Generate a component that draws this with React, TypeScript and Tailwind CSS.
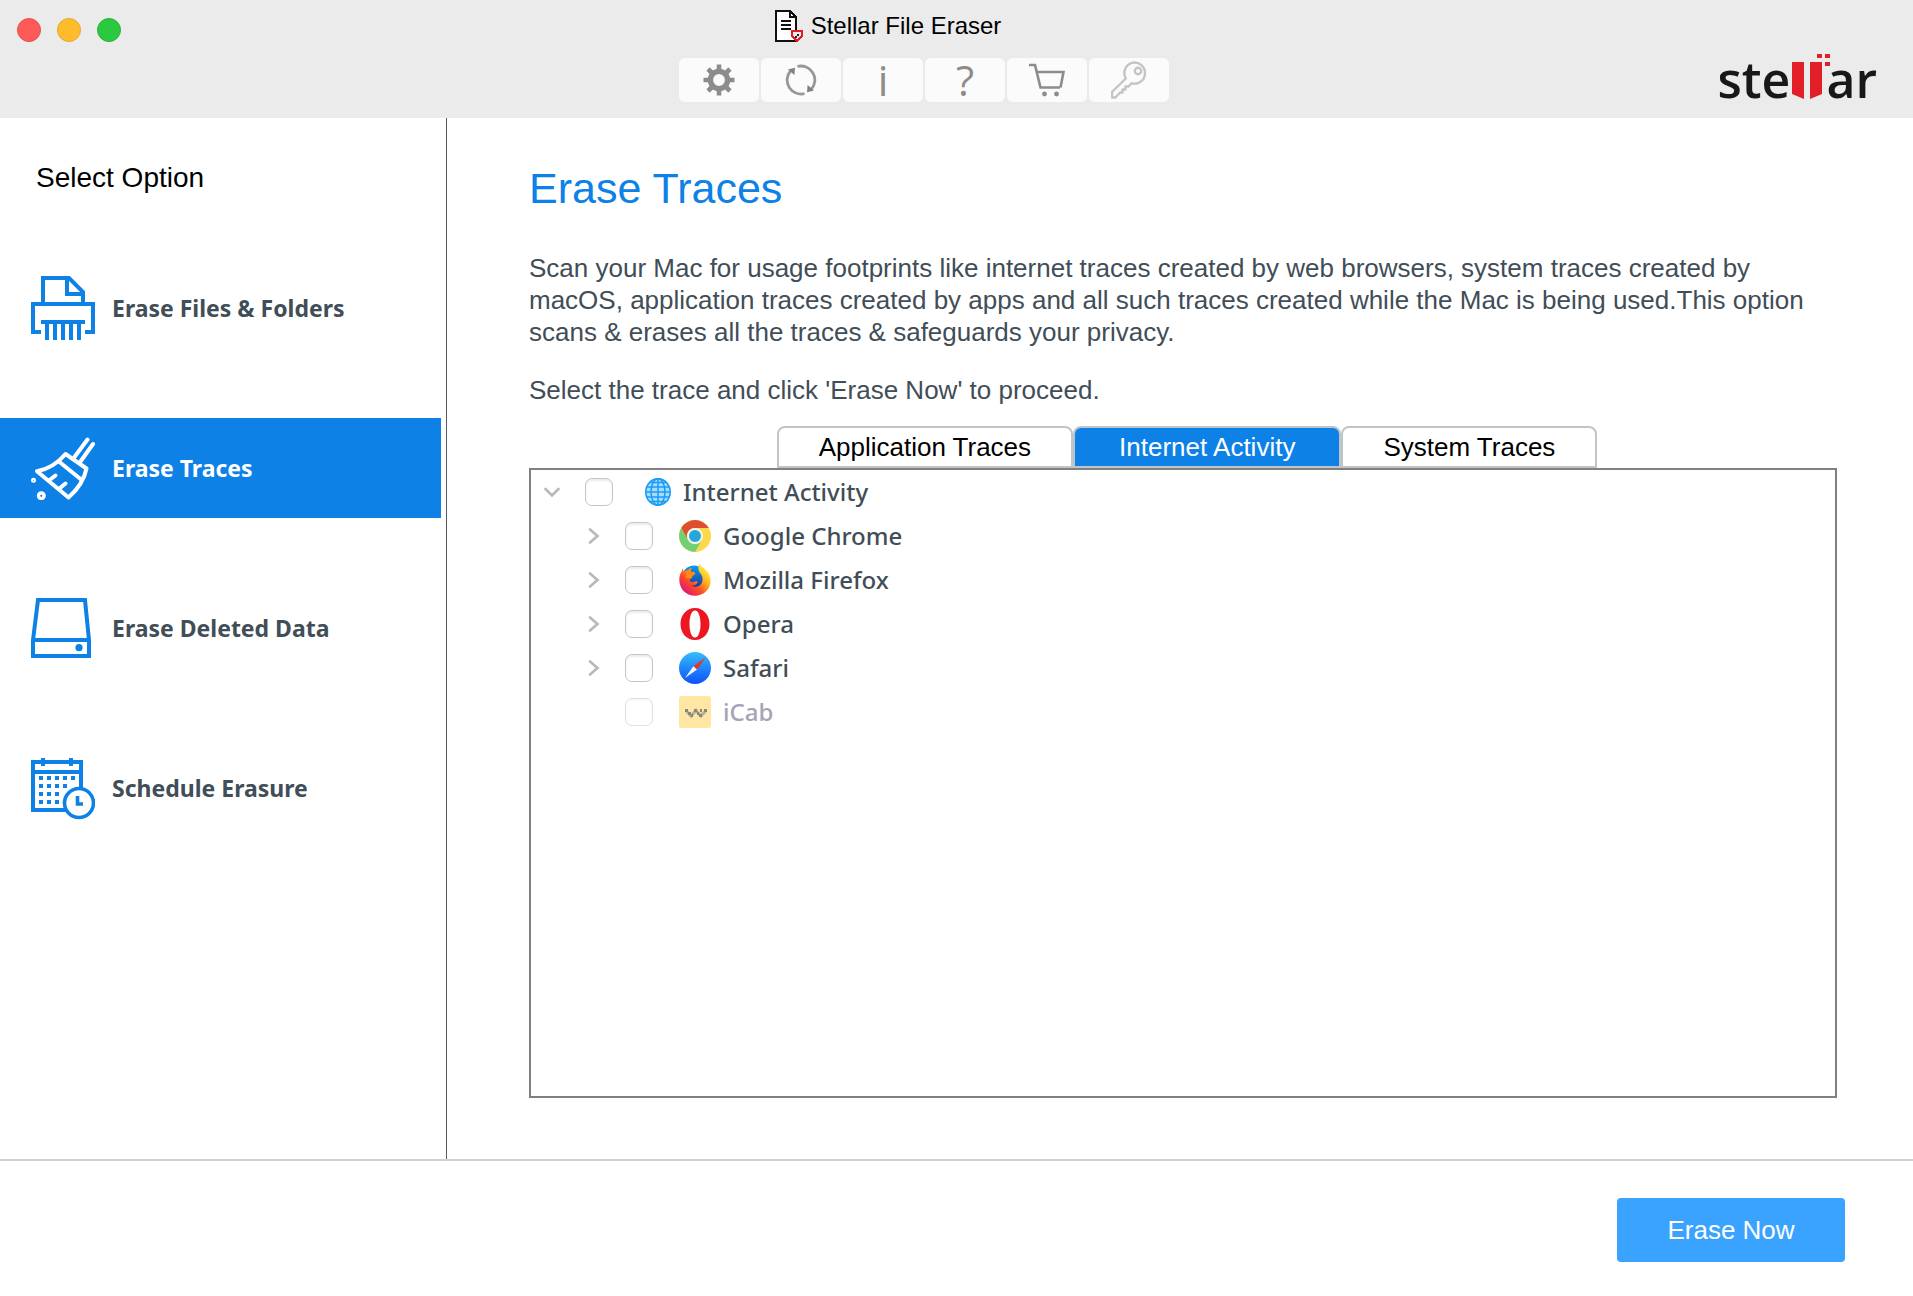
import { useState, type ReactNode } from 'react';

const BLUE = '#0d81e6';

function FileEraserIcon() {
  return (
    <svg width="28" height="32" viewBox="0 0 28 32" aria-hidden="true" shapeRendering="crispEdges">
      <path d="M1 1H15L21 7V31H1Z" fill="#fff" stroke="#111" strokeWidth="2" />
      <path d="M15 1V7H21" fill="none" stroke="#111" strokeWidth="2" />
      <path d="M6 11H16M6 15H16M6 19H16" stroke="#111" strokeWidth="2" />
      <path d="M17 21H27V26L22 31L17 26Z" fill="#ebebeb" stroke="#e01b22" strokeWidth="2" />
      <path d="M20 26H22V28H20ZM22 24H24V26H22Z" fill="#222" />
    </svg>
  );
}

function GearIcon() {
  return (
    <svg width="32" height="32" viewBox="0 0 32 32" aria-hidden="true">
      <g fill="none" stroke="#8c8c8c">
        <circle cx="16" cy="16" r="8.6" strokeWidth="5.4" />
        <path
          d="M16 0.5V6M16 26V31.5M0.5 16H6M26 16H31.5M5 5L9 9M23 23L27 27M5 27L9 23M23 9L27 5"
          strokeWidth="4.6"
        />
      </g>
    </svg>
  );
}

function RefreshIcon() {
  return (
    <svg width="32" height="32" viewBox="0 0 32 32" aria-hidden="true">
      <g fill="none" stroke="#979797" strokeWidth="2.8">
        <path d="M12.5 2.4A14 14 0 0 1 26.4 25.2" />
        <path d="M19.5 29.6A14 14 0 0 1 5.4 7" />
      </g>
      <path d="M3 5.5L10 3.8L9.4 11Z M29 26.5L22 28.2L22.6 21Z" fill="#808080" />
    </svg>
  );
}

function CartIcon() {
  return (
    <svg width="36" height="34" viewBox="0 0 36 34" aria-hidden="true">
      <g fill="none" stroke="#8c8c8c" strokeWidth="2.6">
        <path d="M0 2H6L11.5 24.5H31" />
        <path d="M7.8 9H34.5L31.5 24.5" />
      </g>
      <circle cx="15.5" cy="31" r="2.4" fill="#8c8c8c" />
      <circle cx="27.5" cy="31" r="2.4" fill="#8c8c8c" />
    </svg>
  );
}

function KeyIcon() {
  return (
    <svg width="36" height="38" viewBox="0 0 36 38" aria-hidden="true">
      <g fill="none" stroke="#c4c4c4" strokeWidth="2.4" strokeLinejoin="round">
        <path d="M14.8 17.5A10.3 10.6 0 1 1 20.5 22.2L17.5 25.5H14.5V28.5H11.5V31.5H9L4.5 36.5H1V31Z" />
        <circle cx="27" cy="10" r="3.2" />
      </g>
    </svg>
  );
}

function ShredderIcon() {
  return (
    <svg width="64" height="64" viewBox="0 0 64 64" aria-hidden="true" fill="none" stroke={BLUE} strokeWidth="4">
      <path d="M12 28V2H38L52 16V28" />
      <path d="M36 2V18H52" />
      <path d="M10 56H2V28H62V56H54" />
      <path d="M10 46H54" />
      <path d="M16 46V64M24 46V64M32 46V64M40 46V64M48 46V64" />
    </svg>
  );
}

function BroomIcon() {
  return (
    <svg
      width="64"
      height="64"
      viewBox="0 0 64 64"
      aria-hidden="true"
      fill="none"
      stroke="#fff"
      strokeWidth="4"
      strokeLinecap="round"
      strokeLinejoin="round"
    >
      <path d="M56.5 3.5L43.5 21M62 8L49.5 25.5" />
      <path d="M34.5 18C27 27 18 33 6 35.2L37.5 61.5C47 53 53 45 55.5 32.5Z" />
      <path d="M28.5 26L49.5 43" />
      <path d="M18.5 44L24.5 39.5M29 52L34.5 47.5" />
      <circle cx="2.5" cy="44.2" r="1" strokeWidth="3" />
      <circle cx="10.3" cy="59.8" r="2.800" strokeWidth="3.4" />
    </svg>
  );
}

function DriveIcon() {
  return (
    <svg width="64" height="64" viewBox="0 0 64 64" aria-hidden="true" fill="none" stroke={BLUE} strokeWidth="4">
      <path d="M7 4H54L58 44V60H2V44Z" />
      <path d="M2 44H58" />
      <circle cx="48" cy="51.7" r="3.6" fill={BLUE} stroke="none" />
    </svg>
  );
}

function CalendarIcon() {
  return (
    <svg width="64" height="64" viewBox="0 0 64 64" aria-hidden="true" fill="none" stroke={BLUE} strokeWidth="4">
      <path d="M50 32V6H2V54H34" />
      <path d="M2 16H50" />
      <path d="M12 2V10M40 2V10" />
      <path d="M8 22H44" strokeDasharray="4 4" />
      <path d="M8 30H36" strokeDasharray="4 4" />
      <path d="M8 38H28" strokeDasharray="4 4" />
      <path d="M8 46H28" strokeDasharray="4 4" />
      <circle cx="48" cy="47" r="14.5" fill="#fff" strokeWidth="3.6" />
      <path d="M46.5 40V48H52" strokeWidth="3.6" />
    </svg>
  );
}

function GlobeIcon() {
  return (
    <svg width="26" height="28" viewBox="0 0 26 28" aria-hidden="true">
      <ellipse cx="13" cy="14" rx="13" ry="14" fill="#a5dcff" />
      <g fill="none" stroke="#1a9bf7" strokeWidth="1.5">
        <ellipse cx="13" cy="14" rx="12.2" ry="13.2" />
        <ellipse cx="13" cy="14" rx="7" ry="13.2" />
        <path d="M13 1V27M1 14H25M2 9H24M2 19H24M5 4.6H21M5 23.4H21" />
      </g>
    </svg>
  );
}

function ChromeIcon() {
  return (
    <svg width="32" height="32" viewBox="0 0 32 32" aria-hidden="true">
      <circle cx="16" cy="16" r="16" fill="#fcd94b" />
      <path d="M2.2 8A16 16 0 0 1 29.8 8H16A8 8 0 0 0 9 20Z" fill="#de4f2e" />
      <path d="M2.2 8A16 16 0 0 0 16 32L23 20A8 8 0 0 1 9 20Z" fill="#71cf74" />
      <circle cx="16" cy="16" r="8" fill="#f4f4f0" />
      <circle cx="16" cy="16" r="6" fill="#25a7dc" />
    </svg>
  );
}

function FirefoxIcon() {
  return (
    <svg width="32" height="32" viewBox="0 0 32 32" aria-hidden="true">
      <defs>
        <linearGradient id="fx-body" x1="0.85" y1="0.1" x2="0.15" y2="0.9">
          <stop offset="0" stopColor="#fff04a" />
          <stop offset="0.35" stopColor="#ffae1a" />
          <stop offset="0.65" stopColor="#ff4a26" />
          <stop offset="1" stopColor="#e0127c" />
        </linearGradient>
        <linearGradient id="fx-globe" x1="0" y1="0" x2="0" y2="1">
          <stop offset="0" stopColor="#0a9af5" />
          <stop offset="1" stopColor="#22308f" />
        </linearGradient>
      </defs>
      <circle cx="15" cy="13.5" r="12" fill="url(#fx-globe)" />
      <path
        d="M4 4C4 6 4.300 6.500 5 7.500C6 6.500 7.500 6 9 6.200C10 5 11 4.300 12.500 4C11.800 5.500 11.800 7 12.500 8C14 8.300 16 8.300 16.200 9C16 10.500 14.500 11 13.500 11.800C13 13 13.200 14 12 14.500C11 15 10.500 15.500 11 17C12 18.500 14 18.500 16 17.500C17.500 17 18.500 17.500 18.500 18.500C17.500 20.500 15 22 12.500 21.500C15.500 24 21 23 23 18.500C24 15 23.500 12 21.500 9.500C19 7 18.500 3.500 20.500 0C22 3 28 5 30.500 11C32 16 32 21 29 25C23 33.500 11 34 4 26.500C-0.500 21 -1 12 3 7C3 6 3.200 5 4 4Z"
        fill="url(#fx-body)"
      />
      <path d="M9 6.200C10 5 11 4.300 12.500 4C11.800 5.500 11.800 7 12.500 8C14 8.300 16 8.300 16.200 9C16 10.500 14.500 11 13.500 11.800C13 13 13.200 14 12 14.500L6 14Z" fill="#ff8a16" />
    </svg>
  );
}

function OperaIcon() {
  return (
    <svg width="32" height="32" viewBox="0 0 32 32" aria-hidden="true">
      <path
        fillRule="evenodd"
        d="M16 0C24.500 0 30.500 7 30.500 16S24.500 32 16 32S1.500 25 1.500 16S7.500 0 16 0ZM16 2.500C12.500 2.500 10.500 8.500 10.500 16S12.500 29.500 16 29.500S21.500 23.500 21.500 16S19.500 2.500 16 2.500Z"
        fill="#ee1620"
      />
    </svg>
  );
}

function SafariIcon() {
  return (
    <svg width="32" height="32" viewBox="0 0 32 32" aria-hidden="true">
      <defs>
        <linearGradient id="safari-dial" x1="0" y1="0" x2="0" y2="1">
          <stop offset="0" stopColor="#33bdfb" />
          <stop offset="1" stopColor="#0f50fb" />
        </linearGradient>
      </defs>
      <circle cx="16" cy="16" r="16" fill="url(#safari-dial)" />
      <path d="M26.500 5.500L14.400 14.200L18 17.600Z" fill="#f4301f" />
      <path d="M6 26L14.400 14.200L18 17.600Z" fill="#eef6ff" />
    </svg>
  );
}

function ICabIcon() {
  return (
    <svg width="32" height="32" viewBox="0 0 32 32" aria-hidden="true">
      <rect width="32" height="32" rx="2.500" fill="#ffe7a3" />
      <path d="M7 14.500L12 20L17 14.500L22 20L27 14.500" fill="none" stroke="#b9b08f" strokeWidth="3" />
      <path
        d="M6 13H9V16H6ZM9 16H12V19H9ZM12 18H14V21H12ZM15 13H18V16H15ZM18 16H20V19H18ZM20 18H23V21H20ZM21 13H23V16H21ZM25 13H28V16H25Z"
        fill="#868686"
      />
    </svg>
  );
}

function StellarLogo() {
  return (
    <div
      className="flex items-end font-['Open_Sans',sans-serif] text-[50px] leading-[54px] font-semibold text-[#181818]"
      aria-label="stellar"
    >
      <span>ste</span>
      <svg width="36" height="54" viewBox="0 0 36 54" aria-hidden="true" fill="#e21f26" className="overflow-visible">
        <path d="M2 10H14V47L2 42Z" />
        <path d="M20 10H32V42L20 47Z" />
        <path d="M27 2H32V6H27ZM35 2H40V6H35ZM35 10H40V14H35Z" />
      </svg>
      <span>ar</span>
    </div>
  );
}

const tools: { label: string; icon: ReactNode }[] = [
  { label: 'Settings', icon: <GearIcon /> },
  { label: 'Update', icon: <RefreshIcon /> },
  { label: 'Information', icon: 'i' },
  { label: 'Help', icon: '?' },
  { label: 'Buy', icon: <CartIcon /> },
  { label: 'Activate', icon: <KeyIcon /> },
];

const options: { label: string; icon: ReactNode }[] = [
  { label: 'Erase Files & Folders', icon: <ShredderIcon /> },
  { label: 'Erase Traces', icon: <BroomIcon /> },
  { label: 'Erase Deleted Data', icon: <DriveIcon /> },
  { label: 'Schedule Erasure', icon: <CalendarIcon /> },
];

const tabs = ['Application Traces', 'Internet Activity', 'System Traces'];

const browsers: { label: string; icon: ReactNode; disabled?: boolean }[] = [
  { label: 'Google Chrome', icon: <ChromeIcon /> },
  { label: 'Mozilla Firefox', icon: <FirefoxIcon /> },
  { label: 'Opera', icon: <OperaIcon /> },
  { label: 'Safari', icon: <SafariIcon /> },
  { label: 'iCab', icon: <ICabIcon />, disabled: true },
];

function CheckBox({ id, disabled }: { id: string; disabled?: boolean }) {
  return (
    <input
      id={id}
      type="checkbox"
      disabled={disabled}
      className="size-7 shrink-0 appearance-none rounded-[7px] border border-[#c6c6c6] bg-white shadow-[inset_0_2px_2px_#ececec] checked:bg-[#0d81e6] disabled:border-[#e0e0e0] disabled:shadow-[inset_0_1px_2px_#f4f4f4]"
    />
  );
}

function Chevron({ open, label }: { open?: boolean; label: string }) {
  return (
    <button type="button" aria-label={label} aria-expanded={!!open} className="flex w-4 shrink-0 justify-center">
      <svg width="16" height="16" viewBox="0 0 16 16" fill="none" stroke="#b8b8b8" strokeWidth="2.600" strokeLinecap="round">
        <path d={open ? 'M1.500 5L8 11.500L14.500 5' : 'M5 1.500L12.500 8L5 14.500'} />
      </svg>
    </button>
  );
}

export default function App() {
  const [selected, setSelected] = useState(1);
  const [tab, setTab] = useState(1);

  return (
    <div className="flex min-h-screen flex-col bg-white font-['Liberation_Sans',Arial,sans-serif] text-[26px] leading-8 text-[#414d57]">
      <header className="flex h-[118px] justify-between bg-[#ebebeb] pr-9 pl-[17px]">
        <div className="flex flex-1 gap-4 pt-[18px]">
          <button type="button" aria-label="Close" className="size-6 rounded-full border border-[#e6504e] bg-[#fe5a57]" />
          <button type="button" aria-label="Minimize" className="size-6 rounded-full border border-[#e5a82c] bg-[#febc2c]" />
          <button type="button" aria-label="Zoom" className="size-6 rounded-full border border-[#27b339] bg-[#2bc93f]" />
        </div>
        <div className="flex flex-col items-center pt-[10px] pr-[46px]">
          <div className="flex items-center gap-2 pr-[72px]">
            <FileEraserIcon />
            <h1 className="text-2xl leading-8 text-black">Stellar File Eraser</h1>
          </div>
          <div className="mt-4 flex gap-[2px]">
            {tools.map((tool) => (
              <button
                key={tool.label}
                type="button"
                aria-label={tool.label}
                className="flex h-11 w-20 items-center justify-center rounded-md bg-[#fbfbfb] font-['Open_Sans',sans-serif] text-[42px] leading-[44px] text-[#8c8c8c]"
              >
                {tool.icon}
              </button>
            ))}
          </div>
        </div>
        <div className="flex flex-1 items-start justify-end pt-[52px]">
          <StellarLogo />
        </div>
      </header>

      <div className="flex flex-1">
        <nav className="w-[447px] shrink-0 border-r border-[#5a5a5a] pt-11">
          <h2 className="pl-9 text-[28px] leading-8 text-black">Select Option</h2>
          <ul className="mt-16 flex flex-col gap-[60px] pr-[5px]">
            {options.map((option, i) => (
              <li key={option.label}>
                <button
                  type="button"
                  onClick={() => setSelected(i)}
                  aria-current={i === selected}
                  className={
                    i === selected
                      ? "flex h-[100px] w-full items-center gap-[17px] bg-[#0d81e6] pl-[31px] font-['Noto_Sans',sans-serif] text-[23px] font-bold text-white"
                      : "flex h-[100px] w-full items-center gap-[17px] pl-[31px] font-['Noto_Sans',sans-serif] text-[23px] font-bold text-[#414d57]"
                  }
                >
                  {option.icon}
                  {option.label}
                </button>
              </li>
            ))}
          </ul>
        </nav>

        <main className="flex flex-1 flex-col pt-[46px] pr-[76px] pb-[61px] pl-[82px]">
          <h2 className="text-[43px] leading-[48px] text-[#0d81e6]">Erase Traces</h2>
          <p className="mt-10">
            Scan your Mac for usage footprints like internet traces created by web browsers, system traces created by
            macOS, application traces created by apps and all such traces created while the Mac is being used.This
            option scans &amp; erases all the traces &amp; safeguards your privacy.
          </p>
          <p className="mt-[26px]">Select the trace and click 'Erase Now' to proceed.</p>

          <div role="tablist" className="mt-5 flex justify-center pl-2 text-black">
            {tabs.map((name, i) => (
              <button
                key={name}
                type="button"
                role="tab"
                aria-selected={i === tab}
                onClick={() => setTab(i)}
                className={
                  i === tab
                    ? 'h-[42px] rounded-t-lg border-2 border-[#c0c5ca] bg-[#0d81e6] px-11 text-white'
                    : 'h-[42px] rounded-t-lg border-2 border-[#c0c5ca] bg-white px-10'
                }
              >
                {name}
              </button>
            ))}
          </div>

          <section className="flex-1 border-2 border-[#808080] font-['Noto_Sans',sans-serif] text-2xl font-medium">
            <div className="flex h-11 items-center pl-[13px]">
              <Chevron open label="Collapse Internet Activity" />
              <label htmlFor="internet" className="flex items-center pl-[25px]">
                <CheckBox id="internet" />
                <span className="pr-3 pl-8">
                  <GlobeIcon />
                </span>
                Internet Activity
              </label>
            </div>
            <ul>
              {browsers.map((browser, i) => (
                <li key={browser.label} className="flex h-11 items-center pl-[54px]">
                  {browser.disabled ? <span className="w-4" /> : <Chevron label={'Expand ' + browser.label} />}
                  <label
                    htmlFor={'browser-' + i}
                    className={
                      browser.disabled ? 'flex items-center pl-6 text-[#a6a3b8]' : 'flex items-center pl-6'
                    }
                  >
                    <CheckBox id={'browser-' + i} disabled={browser.disabled} />
                    <span className="pr-3 pl-[26px]">{browser.icon}</span>
                    {browser.label}
                  </label>
                </li>
              ))}
            </ul>
          </section>
        </main>
      </div>

      <footer className="flex justify-end border-t-2 border-[#d0d2d1] pt-[37px] pr-[68px] pb-[34px]">
        <button type="button" className="h-16 w-[228px] rounded bg-[#3aa3ff] text-white">
          Erase Now
        </button>
      </footer>
    </div>
  );
}
